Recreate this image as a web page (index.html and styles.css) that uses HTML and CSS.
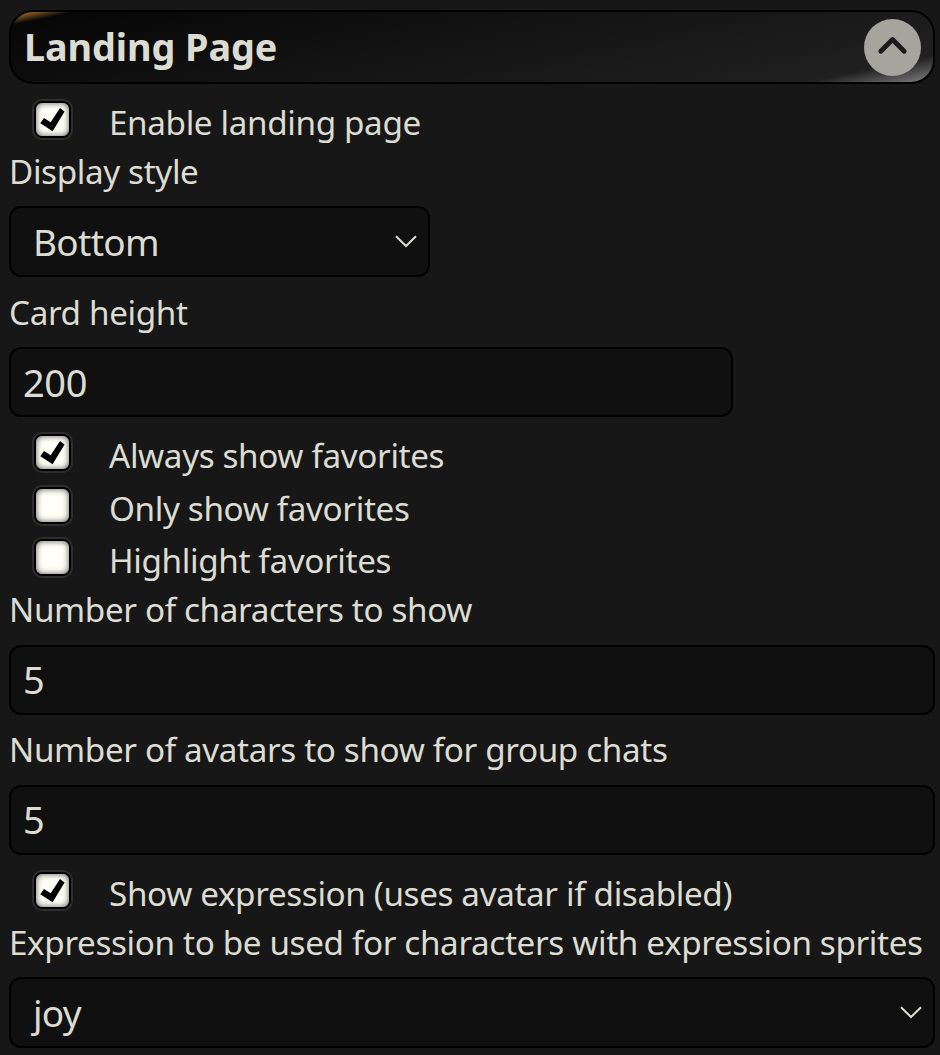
FILE: index.html
```html
<!DOCTYPE html>
<html lang="en">
<head>
<meta charset="utf-8">
<title>Landing Page</title>
<link rel="stylesheet" href="styles.css">
</head>
<body>
<main class="panel">
  <header class="header">
    <h1 class="title">Landing Page</h1>
    <button class="toggle" aria-label="Collapse">
      <svg width="57" height="57" viewBox="0 0 57 57"><path d="M16.8 32.2L28.5 20.5L40.2 32.2" fill="none" stroke="#1b1b1b" stroke-width="4.8" stroke-linecap="round" stroke-linejoin="round"/></svg>
    </button>
  </header>
  <label class="check-row first"><span class="box"><svg class="tick" viewBox="0 0 34 34"><path d="M4.3 20.3L8 15L14.7 19.2L24 4.9L28.6 8.4L16.6 28.3Z"/></svg></span><span>Enable landing page</span></label>
  <div class="label">Display style</div>
  <div class="field select style-select"><span>Bottom</span><svg class="chevron" viewBox="0 0 22 13"><path d="M1 1.2L11 11L21 1.2"/></svg></div>
  <div class="label spaced">Card height</div>
  <div class="field card-height">200</div>
  <label class="check-row always"><span class="box"><svg class="tick" viewBox="0 0 34 34"><path d="M4.3 20.3L8 15L14.7 19.2L24 4.9L28.6 8.4L16.6 28.3Z"/></svg></span><span>Always show favorites</span></label>
  <label class="check-row only"><span class="box"></span><span>Only show favorites</span></label>
  <label class="check-row"><span class="box"></span><span>Highlight favorites</span></label>
  <div class="label">Number of characters to show</div>
  <div class="field count">5</div>
  <div class="label avatars">Number of avatars to show for group chats</div>
  <div class="field count">5</div>
  <label class="check-row expression"><span class="box"><svg class="tick" viewBox="0 0 34 34"><path d="M4.3 20.3L8 15L14.7 19.2L24 4.9L28.6 8.4L16.6 28.3Z"/></svg></span><span>Show expression (uses avatar if disabled)</span></label>
  <div class="label">Expression to be used for characters with expression sprites</div>
  <div class="field select"><span>joy</span><svg class="chevron" viewBox="0 0 22 13"><path d="M1 1.2L11 11L21 1.2"/></svg></div>
</main>
</body>
</html>
```
FILE: styles.css
```css
* { box-sizing: border-box; }
html { background: #171717; }
body {
  margin: 0;
  height: 1055px;
  overflow: hidden;
  color: #dcdcd2;
  font-family: "Noto Sans", sans-serif;
  font-size: 33.25px;
  letter-spacing: -0.37px;
  white-space: nowrap;
}
.panel {
  display: flex;
  flex-direction: column;
  padding: 10px 5px 0 9px;
}
.header {
  display: flex;
  align-items: center;
  justify-content: space-between;
  height: 74px;
  padding: 0 12px 0 13px;
  border: 2px solid #000;
  border-radius: 24px;
  background: linear-gradient(348deg, #808080 0%, #202020 10%, #070707 95%, #d08c30 100%);
}
.title {
  margin: 0;
  font-size: 37.8px;
  line-height: 70px;
  font-weight: 700;
  letter-spacing: -0.1px;
}
.toggle {
  width: 57px;
  height: 57px;
  margin-top: 1px;
  padding: 0;
  border: 0;
  border-radius: 50%;
  background: #a5a59d;
}
.toggle svg { display: block; }
.check-row {
  display: flex;
  height: 52px;
  line-height: 52px;
  padding-left: 25px;
}
.check-row.first { margin-top: 12px; }
.check-row.always { margin-top: 12px; }
.check-row.only { margin-top: 1px; }
.check-row.expression { margin-top: 12px; }
.box {
  width: 37px;
  height: 37px;
  margin: 5px 38px 0 0;
  border: 2px solid #000;
  border-radius: 8px;
  background: #fffff8;
  box-shadow: 0 0 0 2px #2e2e2e, inset 0 0 6px #000a;
}
.tick {
  display: block;
  width: 34px;
  height: 34px;
}
.label {
  height: 46px;
  line-height: 46px;
}
.label.spaced { margin-top: 12px; }
.label.avatars { margin-top: 11px; }
.field {
  height: 70px;
  margin-top: 12px;
  padding: 0 12px;
  line-height: 66px;
  font-size: 38px;
  border: 2px solid #000;
  border-radius: 12px;
  background: #101010;
}
.field.count {
  margin-top: 13px;
  line-height: 65px;
}
.card-height { width: 724px; }
.select {
  display: flex;
  align-items: center;
  justify-content: space-between;
  height: 71px;
  padding: 0 11px 0 22px;
  font-size: 37px;
  line-height: 68px;
  letter-spacing: -0.7px;
}
.select span { padding-top: 1px; }
.style-select { width: 421px; }
.chevron {
  width: 22px;
  height: 13px;
  fill: none;
  stroke: #dcdcd2;
  stroke-width: 2;
}
```
